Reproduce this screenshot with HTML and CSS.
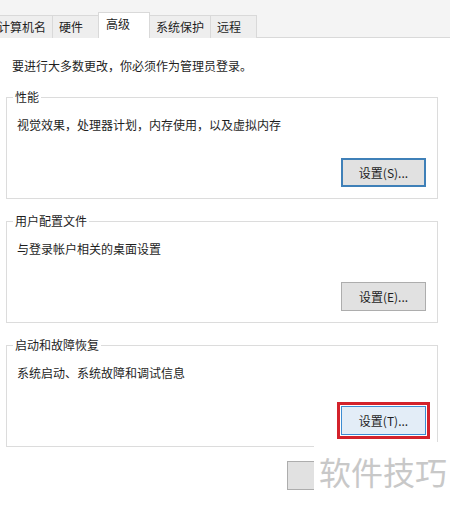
FILE: index.html
```html
<!DOCTYPE html>
<html>

<head>
    <meta charset="utf-8">
    <meta name="viewport" content="width=device-width">
    <title>系统属性</title>
    <link rel="stylesheet" href="styles.css">
</head>

<body>
    <div class="dialog">
        <div class="tabs">
            <span class="tab tab-first">计算机名</span>
            <span class="tab">硬件</span>
            <span class="tab on">高级</span>
            <span class="tab">系统保护</span>
            <span class="tab">远程</span>
        </div>

        <div class="page">
            <p class="notice">要进行大多数更改，你必须作为管理员登录。</p>

            <fieldset class="group">
                <legend>性能</legend>
                <p class="desc">视觉效果，处理器计划，内存使用，以及虚拟内存</p>
                <div class="actions">
                    <button class="btn focus">设置(S)...</button>
                </div>
            </fieldset>

            <fieldset class="group">
                <legend>用户配置文件</legend>
                <p class="desc">与登录帐户相关的桌面设置</p>
                <div class="actions">
                    <button class="btn">设置(E)...</button>
                </div>
            </fieldset>

            <fieldset class="group">
                <legend>启动和故障恢复</legend>
                <p class="desc">系统启动、系统故障和调试信息</p>
                <div class="actions">
                    <button class="btn hover marked">设置(T)...</button>
                </div>
            </fieldset>
        </div>

        <div class="footer">
            <button class="btn"></button>
        </div>

        <div class="watermark">软件技巧</div>
    </div>
</body>

</html>
```

FILE: styles.css
```css
* {
    box-sizing: border-box;
}

body {
    margin: 0;
    background: #fff;
    font-family: "Noto Sans CJK SC", "Noto Sans", sans-serif;
    font-size: 12px;
    color: #1e1e1e;
}

.dialog {
    position: relative;
    width: 450px;
    height: 505px;
    overflow: hidden;
}

/* tab strip */
.tabs {
    display: flex;
    align-items: flex-end;
    height: 38px;
    margin-left: -7px;
    background: #f4f4f4;
    border-bottom: 1px solid #d9d9d9;
}

.tab {
    height: 23px;
    min-width: 47px;
    margin-left: -1px;
    margin-bottom: -1px;
    padding: 0 6px;
    line-height: 21px;
    background: #eeeeee;
    border: 1px solid #d9d9d9;
    border-bottom: 0;
    white-space: nowrap;
}

.tab-first {
    margin-left: 0;
    padding-left: 4px;
}

.tab.on {
    position: relative;
    height: 26px;
    min-width: 52px;
    line-height: 21px;
    padding-left: 7px;
    background: #fff;
    z-index: 1;
}

/* page body */
.page {
    padding-top: 20px;
}

.notice {
    margin: 0 0 15px 12px;
    line-height: 16px;
}

.group {
    margin: 0 12px 14px 6px;
    padding: 12px 11px 11px 10px;
    border: 1px solid #dcdcdc;
    min-width: 0;
}

.group legend {
    margin-left: -4px;
    padding: 0 2px;
    line-height: 16px;
}

.desc {
    margin: 0;
    line-height: 16px;
}

.actions {
    display: flex;
    justify-content: flex-end;
    margin-top: 25px;
}

.btn {
    width: 85px;
    height: 29px;
    padding: 0;
    font-family: inherit;
    font-size: 12px;
    color: #1e1e1e;
    background: #e1e1e1;
    border: 1px solid #adadad;
}

.btn.focus {
    border: 2px solid #3f80b8;
}

.btn.hover {
    background: #e3edf7;
    border-color: #3c8cd2;
}

.btn.marked {
    outline: 3px solid #d3222b;
    outline-offset: 1px;
}

.footer {
    display: flex;
    margin-top: 10px;
    padding-left: 287px;
}

/* overlay stamp in the corner */
.watermark {
    position: absolute;
    left: 314px;
    top: 442px;
    right: 0;
    bottom: 0;
    padding: 11px 0 0 5px;
    background: #fff;
    color: #c8c8c8;
    font-size: 32px;
    line-height: 36px;
    white-space: nowrap;
}
```
